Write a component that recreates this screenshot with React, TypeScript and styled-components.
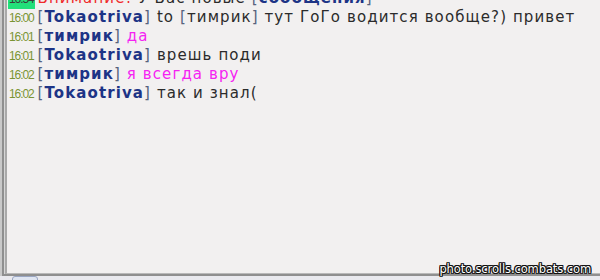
import React from 'react';
import styled, { createGlobalStyle } from 'styled-components';

const GlobalStyle = createGlobalStyle`
  html, body {
    margin: 0;
    padding: 0;
    background: #e4e4e4;
    overflow: hidden;
  }
`;

const Screen = styled.div`
  position: relative;
  width: 600px;
  height: 280px;
  display: flex;
  flex-direction: column;
  overflow: hidden;
  font-family: 'DejaVu Sans', Verdana, sans-serif;
`;

const Frame = styled.div`
  flex: 1;
  display: flex;
  min-height: 0;
  border-left: 2px solid #c9c9c9;
`;

const Sunken = styled.div`
  flex: 1;
  display: flex;
  min-height: 0;
  border-left: 2px solid #8f8f8f;
  border-bottom: 2px solid #8f8f8f;
  background: #d6d6d6;
  padding-left: 1px;
`;

const Log = styled.div`
  flex: 1;
  min-height: 0;
  overflow: hidden;
  background: #f2f0f0;
  border-left: 2px solid #a9a9a9;
  border-bottom: 1px solid #b9b9b9;
`;

const Lines = styled.div`
  margin-top: -11px;
  padding-left: 1px;
`;

const Line = styled.div`
  height: 19px;
  line-height: 19px;
  white-space: nowrap;
  font-size: 15px;
  color: #2b2b2b;
  letter-spacing: 1.1px;
`;

const Time = styled.span<{ $alert?: boolean }>`
  display: inline-block;
  font-family: 'Liberation Sans', Arial, sans-serif;
  font-size: 12px;
  letter-spacing: -1.1px;
  color: ${p => (p.$alert ? '#3a3a3a' : '#7a9434')};
  background: ${p => (p.$alert ? '#22e07a' : 'transparent')};
  padding: 0 1px;
  margin-right: 3px;
`;

const Bracket = styled.span`
  color: #56627e;
`;

const Nick = styled.span<{ $bold?: boolean }>`
  color: ${p => (p.$bold ? '#1d3486' : '#2b2b2b')};
  font-weight: ${p => (p.$bold ? 700 : 400)};
`;

const Msg = styled.span<{ $pink?: boolean }>`
  color: ${p => (p.$pink ? '#f523f2' : '#2b2b2b')};
`;

const Alert = styled.span`
  color: #f02a2a;
`;

const BottomStrip = styled.div`
  height: 4px;
  background: #e9e9ee;
  display: flex;
  padding-left: 12px;
`;

const Tab = styled.div`
  width: 24px;
  height: 6px;
  border: 1px solid #9aa6c2;
  border-radius: 3px 3px 0 0;
  background: #dfe5f2;
`;

const Watermark = styled.div`
  position: absolute;
  right: 9px;
  bottom: 4px;
  font-family: 'DejaVu Sans', Verdana, sans-serif;
  font-size: 11.5px;
  color: #ffffff;
  letter-spacing: -0.1px;
  text-shadow:
    1px 1px 0 #111, -1px -1px 0 #111, 1px -1px 0 #111, -1px 1px 0 #111,
    1px 0 0 #111, -1px 0 0 #111, 0 1px 0 #111, 0 -1px 0 #111;
`;

type Entry = {
  time: string;
  nick: string;
  to?: string;
  text: string;
  pink?: boolean;
};

const entries: Entry[] = [
  { time: '16:00', nick: 'Tokaotriva', to: 'тимрик', text: 'тут ГоГо водится вообще?) привет' },
  { time: '16:01', nick: 'тимрик', text: 'да', pink: true },
  { time: '16:01', nick: 'Tokaotriva', text: 'врешь поди' },
  { time: '16:02', nick: 'тимрик', text: 'я всегда вру', pink: true },
  { time: '16:02', nick: 'Tokaotriva', text: 'так и знал(' },
];

const Who: React.FC<{ name: string; bold?: boolean }> = ({ name, bold }) => (
  <>
    <Bracket>[</Bracket>
    <Nick $bold={bold}>{name}</Nick>
    <Bracket>]</Bracket>
  </>
);

const App: React.FC = () => {
  return (
    <Screen>
      <GlobalStyle />
      <Frame>
        <Sunken>
          <Log>
            <Lines>
              <Line>
                <Time $alert>16:54</Time>
                <Alert>Внимание!</Alert> У Вас новые <Who name="сообщения" bold />
              </Line>
              {entries.map((e, i) => (
                <Line key={i}>
                  <Time>{e.time}</Time>
                  <Who name={e.nick} bold />{' '}
                  {e.to && (
                    <>
                      to <Who name={e.to} />{' '}
                    </>
                  )}
                  <Msg $pink={e.pink}>{e.text}</Msg>
                </Line>
              ))}
            </Lines>
          </Log>
        </Sunken>
      </Frame>
      <BottomStrip>
        <Tab />
      </BottomStrip>
      <Watermark>photo.scrolls.combats.com</Watermark>
    </Screen>
  );
};

export default App;
